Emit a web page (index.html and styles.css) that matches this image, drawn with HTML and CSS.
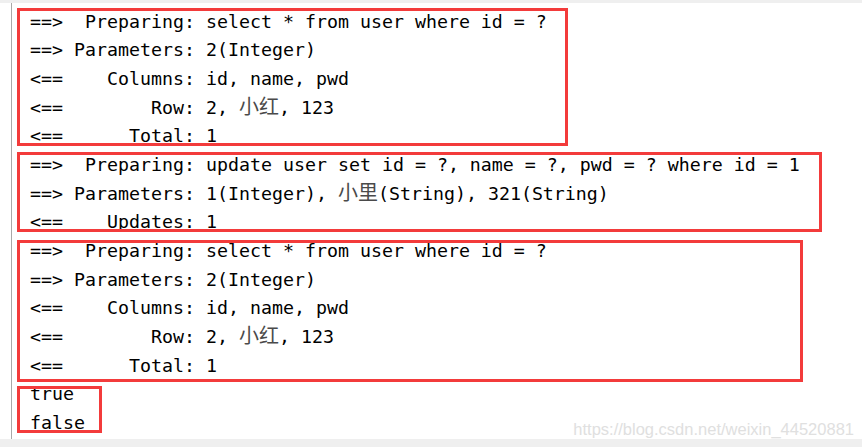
FILE: index.html
```html
<!DOCTYPE html>
<html>
<head>
<meta charset="utf-8">
<link rel="stylesheet" href="styles.css">
</head>
<body>
<div class="frame">
  <div class="topbar"></div>
  <div class="console">
    <div class="group g1">
      <div class="line">==>  Preparing: select * from user where id = ?</div>
      <div class="line">==> Parameters: 2(Integer)</div>
      <div class="line">&lt;==    Columns: id, name, pwd</div>
      <div class="line">&lt;==        Row: 2, <span class="cjk">小红</span>, 123</div>
      <div class="line">&lt;==      Total: 1</div>
    </div>
    <div class="group g2">
      <div class="line">==>  Preparing: update user set id = ?, name = ?, pwd = ? where id = 1</div>
      <div class="line">==> Parameters: 1(Integer), <span class="cjk">小里</span>(String), 321(String)</div>
      <div class="line">&lt;==    Updates: 1</div>
    </div>
    <div class="group g3">
      <div class="line">==>  Preparing: select * from user where id = ?</div>
      <div class="line">==> Parameters: 2(Integer)</div>
      <div class="line">&lt;==    Columns: id, name, pwd</div>
      <div class="line">&lt;==        Row: 2, <span class="cjk">小红</span>, 123</div>
      <div class="line">&lt;==      Total: 1</div>
    </div>
    <div class="group g4">
      <div class="line">true</div>
      <div class="line">false</div>
    </div>
    <div class="watermark">https://blog.csdn.net/weixin_44520881</div>
  </div>
  <div class="bottombar"></div>
</div>
</body>
</html>
```
FILE: styles.css
```css
html, body {
  margin: 0;
  padding: 0;
  background: #ffffff;
}
.frame {
  width: 862px;
  height: 447px;
  overflow: hidden;
  display: flex;
  flex-direction: column;
}
.topbar {
  height: 3px;
  background: #efefef;
  flex: none;
}
.console {
  position: relative;
  flex: none;
  height: 436px;
  box-sizing: border-box;
  margin-left: 11px;
  border-left: 1px solid #a8a8a8;
  padding: 4.5px 0 0 18px;
  font-family: "DejaVu Sans Mono", "Liberation Mono", monospace;
  font-size: 18.27px;
  line-height: 28.7px;
  color: #000000;
}
.bottombar {
  flex: 1;
  background: #efefef;
}
.line {
  white-space: pre;
  height: 28.7px;
}
.cjk {
  font-family: "Noto Sans CJK SC", sans-serif;
  font-size: 20px;
  line-height: 1;
  color: #4a4a4a;
}
.group {
  position: relative;
}
.group::before {
  content: "";
  position: absolute;
  left: -13px;
  top: var(--t);
  bottom: var(--b);
  width: var(--w);
  border: 3px solid #f33b3b;
  box-sizing: border-box;
}
.g1 { --t: 0.5px; --b: 5px; --w: 551px; }
.g2 { --t: 1px; --b: 5.1px; --w: 805px; }
.g3 { --t: 2.9px; --b: -1.4px; --w: 786px; }
.g4 { --t: 5.4px; --b: 5px; --w: 85px; }
.watermark {
  position: absolute;
  right: 8px;
  bottom: 1px;
  font-family: "Liberation Sans", Arial, sans-serif;
  font-size: 16.5px;
  line-height: 18px;
  color: #e0e0e0;
}
```
